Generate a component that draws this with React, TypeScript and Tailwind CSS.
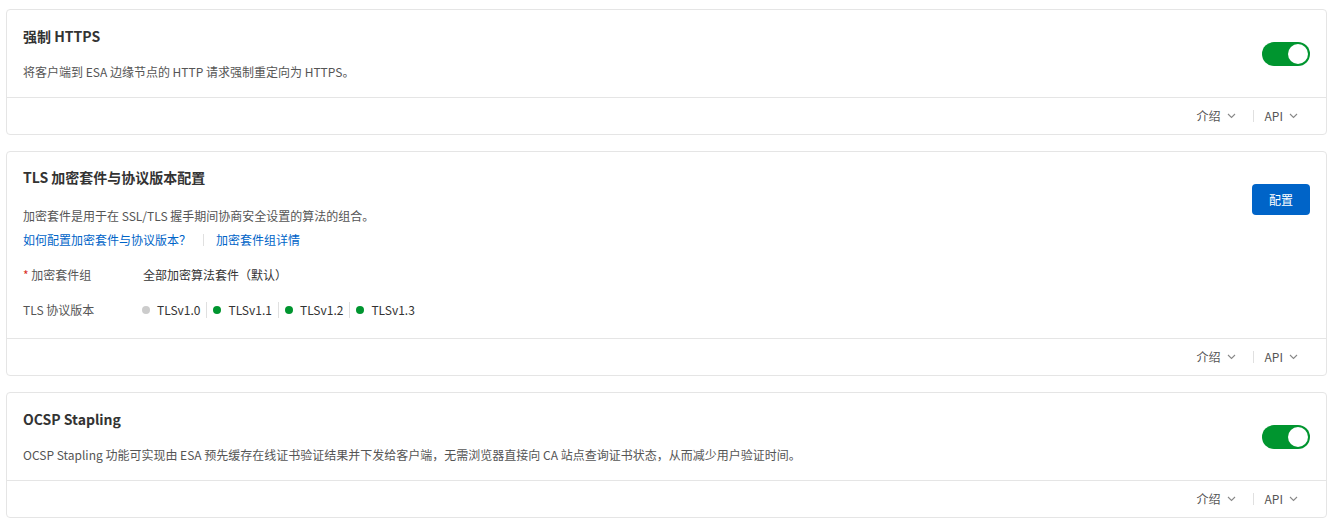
import React from "react";

function Chevron() {
  return (
    <svg width="9" height="6" viewBox="0 0 9 6" className="ml-[6px]" fill="none">
      <path d="M1 1l3.5 3.5L8 1" stroke="#888" strokeWidth="1.1" />
    </svg>
  );
}

function Footer() {
  return (
    <div className="flex h-[37px] items-center justify-end border-t border-[#e5e5e5] pr-[28px] text-xs text-[#555]">
      <span className="flex items-center">介绍<Chevron /></span>
      <span className="ml-[17px] mr-[11px] h-3 w-px bg-[#e0e0e0]" />
      <span className="flex items-center">API<Chevron /></span>
    </div>
  );
}

function Toggle() {
  return (
    <div className="mt-[2px] flex h-6 w-12 items-center justify-end rounded-full bg-[#00952f] pr-[2px]">
      <div className="h-5 w-5 rounded-full bg-white" />
    </div>
  );
}

function Dot({ on, label }: { on: boolean; label: string }) {
  return (
    <span className="flex items-center">
      <span className={on ? "h-2 w-2 rounded-full bg-[#00952f]" : "h-2 w-2 rounded-full bg-[#cccccc]"} />
      <span className="ml-[7px] text-[#333]">{label}</span>
    </span>
  );
}

function Sep() {
  return <span className="ml-[6px] mr-[6px] h-4 w-px bg-[#e0e0e0]" />;
}

export default function App() {
  return (
    <div
      className="flex flex-col gap-4 bg-white px-[6px] pt-[9px] pr-[14px]"
      style={{ fontFamily: '"Noto Sans CJK SC", sans-serif' }}
    >
      <div className="rounded border border-[#e5e5e5] bg-white">
        <div className="flex items-center justify-between px-4 pt-[14px] pb-[15px]">
          <div>
            <div className="text-sm font-bold leading-6 text-[#333]">强制 HTTPS</div>
            <div className="mt-[14px] text-xs leading-5 text-[#555]">将客户端到 ESA 边缘节点的 HTTP 请求强制重定向为 HTTPS。</div>
          </div>
          <Toggle />
        </div>
        <Footer />
      </div>

      <div className="rounded border border-[#e5e5e5] bg-white">
        <div className="flex items-start justify-between px-4 pt-[13px] pb-[11px]">
          <div>
            <div className="text-sm font-bold leading-6 text-[#333]">TLS 加密套件与协议版本配置</div>
            <div className="mt-[17px] text-xs leading-5 text-[#555]">加密套件是用于在 SSL/TLS 握手期间协商安全设置的算法的组合。</div>
            <div className="mt-[4px] flex items-center text-xs leading-5 text-[#0064c8]">
              <span>如何配置加密套件与协议版本？</span>
              <span className="mx-3 h-3 w-px bg-[#e0e0e0]" />
              <span>加密套件组详情</span>
            </div>
            <div className="mt-[7px] flex h-[35px] items-center text-xs">
              <div className="w-[120px] text-[#555]"><span className="text-[#d93026]">*</span> 加密套件组</div>
              <div className="text-[#333]">全部加密算法套件（默认）</div>
            </div>
            <div className="flex h-[35px] items-center text-xs">
              <div className="w-[119px] text-[#555]">TLS 协议版本</div>
              <div className="flex items-center">
                <Dot on={false} label="TLSv1.0" />
                <Sep />
                <Dot on label="TLSv1.1" />
                <Sep />
                <Dot on label="TLSv1.2" />
                <Sep />
                <Dot on label="TLSv1.3" />
              </div>
            </div>
          </div>
          <button className="mt-[19px] h-[31px] w-[58px] rounded-sm bg-[#0064c8] text-xs text-white">配置</button>
        </div>
        <Footer />
      </div>

      <div className="rounded border border-[#e5e5e5] bg-white">
        <div className="flex items-center justify-between px-4 pt-[14px] pb-[15px]">
          <div>
            <div className="text-sm font-bold leading-6 text-[#333]">OCSP Stapling</div>
            <div className="mt-[14px] text-xs leading-5 text-[#555]">OCSP Stapling 功能可实现由 ESA 预先缓存在线证书验证结果并下发给客户端，无需浏览器直接向 CA 站点查询证书状态，从而减少用户验证时间。</div>
          </div>
          <Toggle />
        </div>
        <Footer />
      </div>
    </div>
  );
}
